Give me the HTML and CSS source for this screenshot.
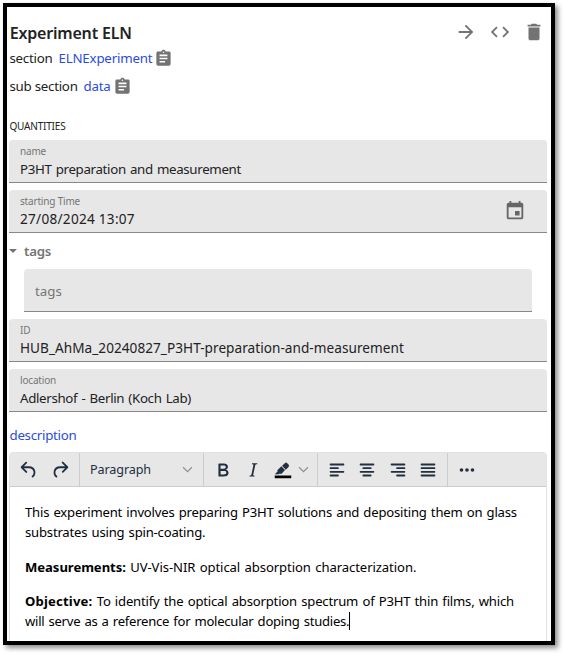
FILE: index.html
```html
<!DOCTYPE html>
<html lang="en">
<head>
<meta charset="utf-8">
<title>Experiment ELN</title>
<link rel="stylesheet" href="styles.css">
</head>
<body>
<main class="card">
  <header class="head">
    <h1 class="title">Experiment ELN</h1>
    <div class="actions">
      <svg viewBox="0 0 24 24"><path d="M12 4l-1.410 1.410L16.170 11H4v2h12.170l-5.580 5.590L12 20l8-8z"/></svg>
      <svg viewBox="0 0 24 24"><path d="M9.400 16.600L4.800 12l4.600-4.600L8 6l-6 6 6 6 1.400-1.400zm5.200 0l4.600-4.600-4.600-4.600L16 6l6 6-6 6-1.400-1.400z"/></svg>
      <svg viewBox="0 0 24 24"><path d="M6 19c0 1.100.9 2 2 2h8c1.100 0 2-.9 2-2V7H6v12zM19 4h-3.500l-1-1h-5l-1 1H5v2h14V4z"/></svg>
    </div>
  </header>
  <div class="line"><span class="t-section">section</span><a class="t-eln">ELNExperiment</a>
    <svg viewBox="0 0 24 24"><path d="M19 3h-4.180C14.400 1.840 13.300 1 12 1c-1.300 0-2.400.84-2.820 2H5c-1.100 0-2 .9-2 2v14c0 1.100.9 2 2 2h14c1.100 0 2-.9 2-2V5c0-1.100-.9-2-2-2zm-7 0c.55 0 1 .45 1 1s-.45 1-1 1-1-.45-1-1 .45-1 1-1zm2 14H7v-2h7v2zm3-4H7v-2h10v2zm0-4H7V7h10v2z"/></svg></div>
  <div class="line"><span class="t-section">sub section</span><a class="t-data">data</a>
    <svg viewBox="0 0 24 24"><path d="M19 3h-4.180C14.400 1.840 13.300 1 12 1c-1.300 0-2.400.84-2.820 2H5c-1.100 0-2 .9-2 2v14c0 1.100.9 2 2 2h14c1.100 0 2-.9 2-2V5c0-1.100-.9-2-2-2zm-7 0c.55 0 1 .45 1 1s-.45 1-1 1-1-.45-1-1 .45-1 1-1zm2 14H7v-2h7v2zm3-4H7v-2h10v2zm0-4H7V7h10v2z"/></svg></div>
  <h2 class="overline">QUANTITIES</h2>
  <div class="field"><div><label>name</label><p class="value v-name">P3HT preparation and measurement</p></div></div>
  <div class="field"><div><label>starting Time</label><p class="value v-time">27/08/2024 13:07</p></div>
    <svg class="calendar" viewBox="0 0 24 24"><path d="M17 12h-5v5h5v-5zM16 1v2H8V1H6v2H5c-1.110 0-1.990.9-1.990 2L3 19c0 1.100.89 2 2 2h14c1.100 0 2-.9 2-2V5c0-1.100-.9-2-2-2h-1V1h-2zm3 18H5V8h14v11z"/></svg></div>
  <div class="group"><i class="caret"></i><span>tags</span></div>
  <div class="field nested"><span class="hint">tags</span></div>
  <div class="field"><div><label>ID</label><p class="value v-id">HUB_AhMa_20240827_P3HT-preparation-and-measurement</p></div></div>
  <div class="field"><div><label>location</label><p class="value v-location">Adlershof - Berlin (Koch Lab)</p></div></div>
  <div class="desc"><a>description</a></div>
  <section class="editor">
    <div class="toolbar">
      <div class="tools history">
        <svg viewBox="0 0 24 24"><path d="M6.400 8H12c3.700 0 6.200 2 6.800 5.100.6 2.700-.4 5.600-2.300 6.800a1 1 0 0 1-1-1.800c1.100-.6 1.800-2.700 1.400-4.600-.5-2.100-2.100-3.500-4.900-3.500H6.400l3.300 3.300a1 1 0 1 1-1.400 1.400l-5-5a1 1 0 0 1 0-1.400l5-5a1 1 0 0 1 1.400 1.400L6.400 8z"/></svg>
        <svg viewBox="0 0 24 24"><path d="M17.600 10H12c-2.800 0-4.400 1.400-4.900 3.500-.4 2 .3 4 1.400 4.600a1 1 0 1 1-1 1.800c-2-1.200-2.900-4.100-2.300-6.800.6-3 3-5.100 6.800-5.100h5.600l-3.300-3.300a1 1 0 1 1 1.400-1.400l5 5a1 1 0 0 1 0 1.400l-5 5a1 1 0 0 1-1.400-1.400l3.300-3.300z"/></svg>
      </div>
      <div class="tools block"><span>Paragraph</span><svg class="chev" viewBox="0 0 10 10"><path d="M1 3l4 4 4-4"/></svg></div>
      <div class="tools format">
        <svg viewBox="0 0 24 24"><path fill-rule="evenodd" d="M7.800 19c-.3 0-.5 0-.6-.2l-.2-.5V5.700c0-.2 0-.4.2-.5l.6-.2h5c1.500 0 2.700.3 3.500 1 .7.600 1.100 1.400 1.100 2.500a3 3 0 0 1-.6 1.900c-.4.600-1 1-1.600 1.200.4.100.9.300 1.300.6s.8.700 1 1.200c.4.400.5 1 .5 1.600 0 1.300-.4 2.300-1.300 3-.8.700-2.100 1-3.800 1H7.800zm5-8.300c.6 0 1.200-.1 1.600-.5.400-.3.600-.7.600-1.300 0-1.100-.8-1.700-2.300-1.700H9.300v3.500h3.400zm.5 6c.7 0 1.300-.1 1.700-.4.400-.4.600-.9.600-1.500s-.2-1-.7-1.400c-.4-.3-1-.4-2-.4H9.400v3.800h4z"/></svg>
        <svg viewBox="0 0 24 24"><path d="M16.700 4.700l-.1.900h-.3c-.6 0-1 0-1.400.3-.3.300-.4.600-.5 1.100l-2.100 9.800v.6c0 .5.400.8 1.400.8h.2l-.2.800H8l.2-.8h.2c1.100 0 1.800-.5 2-1.500l2-9.800.1-.5c0-.6-.4-.8-1.400-.8h-.3l.2-.9h5.800z"/></svg>
        <svg viewBox="0 0 24 24"><path fill="#000" d="M3 18h18v3H3z"/><path d="M7.700 16.700H3l3.300-3.300-.7-.8L10.200 8l4 4.100-4 4.200c-.2.200-.6.200-.8 0l-.6-.7-1.100 1.100zm5-7.500L11 7.400l3-2.900a2 2 0 0 1 2.600 0L18 6c.7.700.7 2 0 2.700l-2.900 2.900-1.800-1.800-.5-.6"/></svg>
        <svg class="chev" viewBox="0 0 10 10"><path d="M1 3l4 4 4-4"/></svg>
      </div>
      <div class="tools align">
        <svg viewBox="0 0 24 24"><path d="M5 5h14a1 1 0 0 1 0 2H5a1 1 0 0 1 0-2zm0 4h8a1 1 0 0 1 0 2H5a1 1 0 0 1 0-2zm0 8h8a1 1 0 0 1 0 2H5a1 1 0 0 1 0-2zm0-4h14a1 1 0 0 1 0 2H5a1 1 0 0 1 0-2z"/></svg>
        <svg viewBox="0 0 24 24"><path d="M5 5h14a1 1 0 0 1 0 2H5a1 1 0 0 1 0-2zm3 4h8a1 1 0 0 1 0 2H8a1 1 0 0 1 0-2zm0 8h8a1 1 0 0 1 0 2H8a1 1 0 0 1 0-2zm-3-4h14a1 1 0 0 1 0 2H5a1 1 0 0 1 0-2z"/></svg>
        <svg viewBox="0 0 24 24"><path d="M5 5h14a1 1 0 0 1 0 2H5a1 1 0 0 1 0-2zm6 4h8a1 1 0 0 1 0 2h-8a1 1 0 0 1 0-2zm0 8h8a1 1 0 0 1 0 2h-8a1 1 0 0 1 0-2zm-6-4h14a1 1 0 0 1 0 2H5a1 1 0 0 1 0-2z"/></svg>
        <svg viewBox="0 0 24 24"><path d="M5 5h14a1 1 0 0 1 0 2H5a1 1 0 0 1 0-2zm0 4h14a1 1 0 0 1 0 2H5a1 1 0 0 1 0-2zm0 4h14a1 1 0 0 1 0 2H5a1 1 0 0 1 0-2zm0 4h14a1 1 0 0 1 0 2H5a1 1 0 0 1 0-2z"/></svg>
      </div>
      <div class="tools more"><svg viewBox="0 0 24 24"><circle cx="6" cy="12" r="2"/><circle cx="12" cy="12" r="2"/><circle cx="18" cy="12" r="2"/></svg></div>
    </div>
    <div class="content">
      <p class="intro">This experiment involves preparing P3HT solutions and depositing them on glass<br>substrates using spin-coating.</p>
      <p class="measure"><b>Measurements:</b> UV-Vis-NIR optical absorption characterization.</p>
      <p class="objective"><b>Objective:</b> To identify the optical absorption spectrum of P3HT thin films, which<br><span class="last">will serve as a reference for molecular doping studies.</span><i class="cursor"></i></p>
    </div>
  </section>
</main>
</body>
</html>
```
FILE: styles.css
```css
* { box-sizing: border-box; }
body { margin: 0; min-height: 654px; padding: 3px; background: #fff; font-family: "Noto Sans", sans-serif; color: #222; }
h1, h2, p { margin: 0; font-weight: 400; }
svg { fill: #737373; flex: none; }
a { color: #2a4cdf; }
.card {
  width: 552px; height: 642px;
  border: 4px solid #000; padding: 12px 4px 0 2px;
  box-shadow: 3px 3px 5px rgba(0, 0, 0, .45);
  background: #fff; overflow: hidden;
}
.head { display: flex; height: 27px; justify-content: space-between; padding: 0 2px 0 .7px; }
.title { font-size: 16px; font-weight: 600; line-height: 28px; letter-spacing: -.19px; white-space: nowrap; }
.actions { display: flex; gap: 12px; padding-top: 2px; }
.actions svg { width: 22px; height: 22px; }
.line { display: flex; align-items: center; height: 28px; padding: 0 0 4px .5px; font-size: 13.300px; line-height: 22px; white-space: nowrap; }
.line a { margin-left: 6px; }
.line svg { width: 19px; height: 19px; margin-left: 2px; }
.t-section { letter-spacing: -.26px; }
.t-eln { letter-spacing: -.19px; }
.t-data { letter-spacing: -.23px; }
.overline { height: 38px; padding: 16px 0 0 .5px; font-size: 10px; line-height: 16px; letter-spacing: -.2px; }
.field {
  display: flex; justify-content: space-between; height: 43px; margin-bottom: 7px;
  padding: 4px 21px 0 11px; background: #e7e7e7; border-bottom: 1px solid #888;
  border-radius: 4px 4px 0 0; white-space: nowrap;
}
.field label { display: block; font-size: 10px; line-height: 15px; letter-spacing: -.18px; color: #757575; }
.value { font-size: 13.600px; line-height: 20px; }
.v-name { font-size: 13.300px; word-spacing: 1px; letter-spacing: -.33px; }
.v-time { letter-spacing: .27px; }
.v-id { letter-spacing: .041px; }
.v-location { font-size: 13.300px; word-spacing: 1px; letter-spacing: -.333px; }
.calendar { width: 22px; height: 22px; margin-top: 6px; fill: #666; }
.group { display: flex; align-items: center; height: 22px; margin-bottom: 7px; font-size: 13.300px; font-weight: 600; letter-spacing: -.27px; color: #737373; }
.caret { width: 8px; border: 4px solid transparent; border-top-color: #737373; border-bottom: 0; margin-right: 7px; }
.nested { margin-left: 15px; margin-right: 15px; }
.hint { font-size: 13.300px; line-height: 36px; color: #757575; }
.desc { height: 33px; padding: 5px 0 0 .5px; font-size: 13.300px; line-height: 22px; letter-spacing: -.277px; }
.editor { height: 200px; border: 1px solid #e2e2e2; border-radius: 4px 4px 0 0; color: #000; }
.toolbar { display: flex; height: 34px; background: #e7e7e7; border-bottom: 1px solid #ccc; }
.toolbar svg { width: 22px; height: 22px; fill: #222f3e; }
.toolbar .chev { width: 11px; height: 11px; fill: none; stroke: #8c9197; stroke-width: 1.100; }
.tools { display: flex; align-items: center; border-right: 1px solid #ccc; }
.history { width: 70px; padding-left: 8px; gap: 9px; }
.block { width: 124px; padding: 0 10px; justify-content: space-between; font-size: 12.600px; letter-spacing: -.11px; color: #222f3e; }
.format { width: 114px; padding-left: 8px; gap: 8px; }
.format .chev { margin-left: -4px; }
.align { width: 130px; padding-left: 8px; gap: 8.300px; }
.more { border: 0; padding-left: 8px; }
.content { padding: 15px 15px; font-size: 13.100px; line-height: 20px; word-spacing: 1px; white-space: nowrap; }
.content p { margin-bottom: 14px; }
.content .intro { margin-bottom: 15px; letter-spacing: -.2px; }
.measure { letter-spacing: -.08px; }
.measure b { letter-spacing: -.05px; }
.objective { letter-spacing: -.185px; }
.objective b { letter-spacing: .18px; }
.last { letter-spacing: -.267px; }
.cursor { display: inline-block; width: 1px; height: 18px; background: #000; vertical-align: -4px; }
```
